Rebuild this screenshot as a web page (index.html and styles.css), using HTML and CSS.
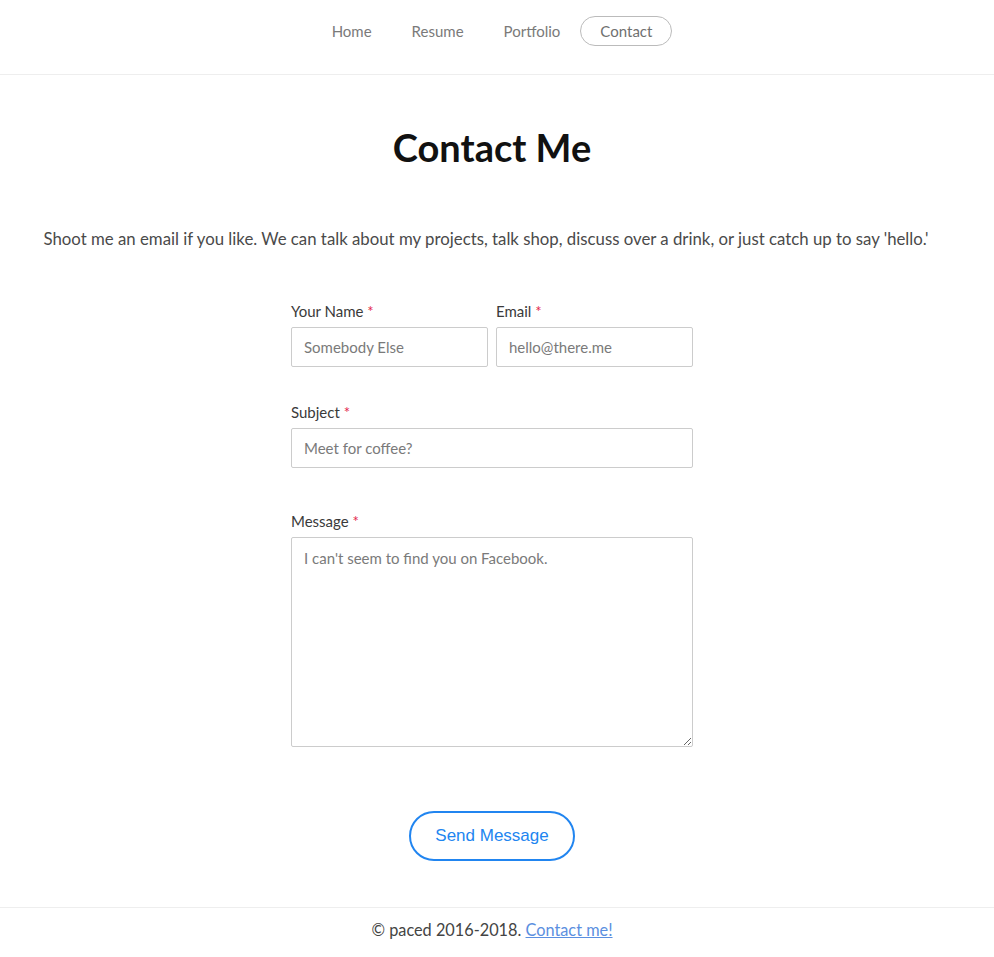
FILE: index.html
```html
<!DOCTYPE html>
<html lang="en">
<head>
<meta charset="utf-8">
<title>Contact</title>
<link rel="stylesheet" href="styles.css">
</head>
<body>
<header class="topbar">
  <nav class="nav">
    <a class="nav-link" href="#">Home</a>
    <a class="nav-link" href="#">Resume</a>
    <a class="nav-link" href="#">Portfolio</a>
    <a class="nav-link active" href="#">Contact</a>
  </nav>
</header>
<main class="main">
  <h1 class="title">Contact Me</h1>
  <p class="intro">Shoot me an email if you like. We can talk about my projects, talk shop, discuss over a drink, or just catch up to say 'hello.'</p>
  <form class="form">
    <div class="row two">
      <div class="field">
        <label class="label">Your Name <span class="req">*</span></label>
        <input class="input" type="text" placeholder="Somebody Else">
      </div>
      <div class="field">
        <label class="label">Email <span class="req">*</span></label>
        <input class="input" type="text" placeholder="hello@there.me">
      </div>
    </div>
    <div class="row">
      <div class="field">
        <label class="label">Subject <span class="req">*</span></label>
        <input class="input" type="text" placeholder="Meet for coffee?">
      </div>
    </div>
    <div class="row msg">
      <div class="field">
        <label class="label">Message <span class="req">*</span></label>
        <textarea class="input area" placeholder="I can't seem to find you on Facebook."></textarea>
      </div>
    </div>
    <div class="actions">
      <button class="send" type="button">Send Message</button>
    </div>
  </form>
</main>
<footer class="footer">
  © paced 2016-2018. <a class="foot-link" href="#">Contact me!</a>
</footer>
</body>
</html>
```
FILE: styles.css
```css
* { box-sizing: border-box; }
body {
  margin: 0;
  font-family: "Lato", "Open Sans", sans-serif;
  color: #444;
  background: #fff;
}
.topbar {
  height: 75px;
  border-bottom: 1px solid #eee;
  display: flex;
  justify-content: center;
  padding: 16px 10px 0 0;
}
.nav {
  display: flex;
  height: 30px;
}
.nav-link {
  display: flex;
  align-items: center;
  padding: 0 19px;
  font-size: 15px;
  color: #7a7a7a;
  text-decoration: none;
  border: 1px solid transparent;
  border-radius: 16px;
}
.nav-link.active {
  border-color: #bbb;
  color: #707070;
}
.main {
  display: flex;
  flex-direction: column;
  align-items: center;
  padding-right: 10px;
}
.title {
  margin: 50px 0 0;
  font-size: 38px;
  line-height: 44px;
  font-weight: 700;
  color: #111;
}
.intro {
  margin: 58px 12px 0 0;
  font-size: 16.8px;
  line-height: 24px;
  color: #4a4a4a;
}
.form {
  width: 402px;
  margin-top: 50px;
  display: flex;
  flex-direction: column;
}
.row { display: flex; gap: 8px; }
.row + .row { margin-top: 35px; }
.row.msg { margin-top: 43px; }
.field { flex: 1; min-width: 0; display: flex; flex-direction: column; }
.label {
  font-size: 15px;
  line-height: 20px;
  color: #3a3a3a;
  margin-bottom: 6px;
}
.req { color: #e3264a; }
.input {
  width: 100%;
  min-width: 0;
  height: 40px;
  border: 1px solid #ccc;
  border-radius: 2px;
  padding: 0 12px;
  font-family: inherit;
  font-size: 15px;
  color: #444;
  outline: none;
}
.input::placeholder { color: #7a7a7a; }
.area {
  height: 210px;
  padding: 10px 12px;
  line-height: 20px;
  resize: vertical;
}
.actions {
  display: flex;
  justify-content: center;
  margin-top: 64px;
}
.send {
  width: 166px;
  height: 50px;
  border: 2px solid #2185f0;
  border-radius: 25px;
  background: #fff;
  color: #2185f0;
  font-family: "Liberation Sans", Arial, sans-serif;
  font-size: 17px;
}
.footer {
  margin-top: 46px;
  padding-right: 10px;
  border-top: 1px solid #eee;
  text-align: center;
  font-size: 16.3px;
  line-height: 44px;
  color: #444;
}
.foot-link { color: #5b8fe0; }
```
